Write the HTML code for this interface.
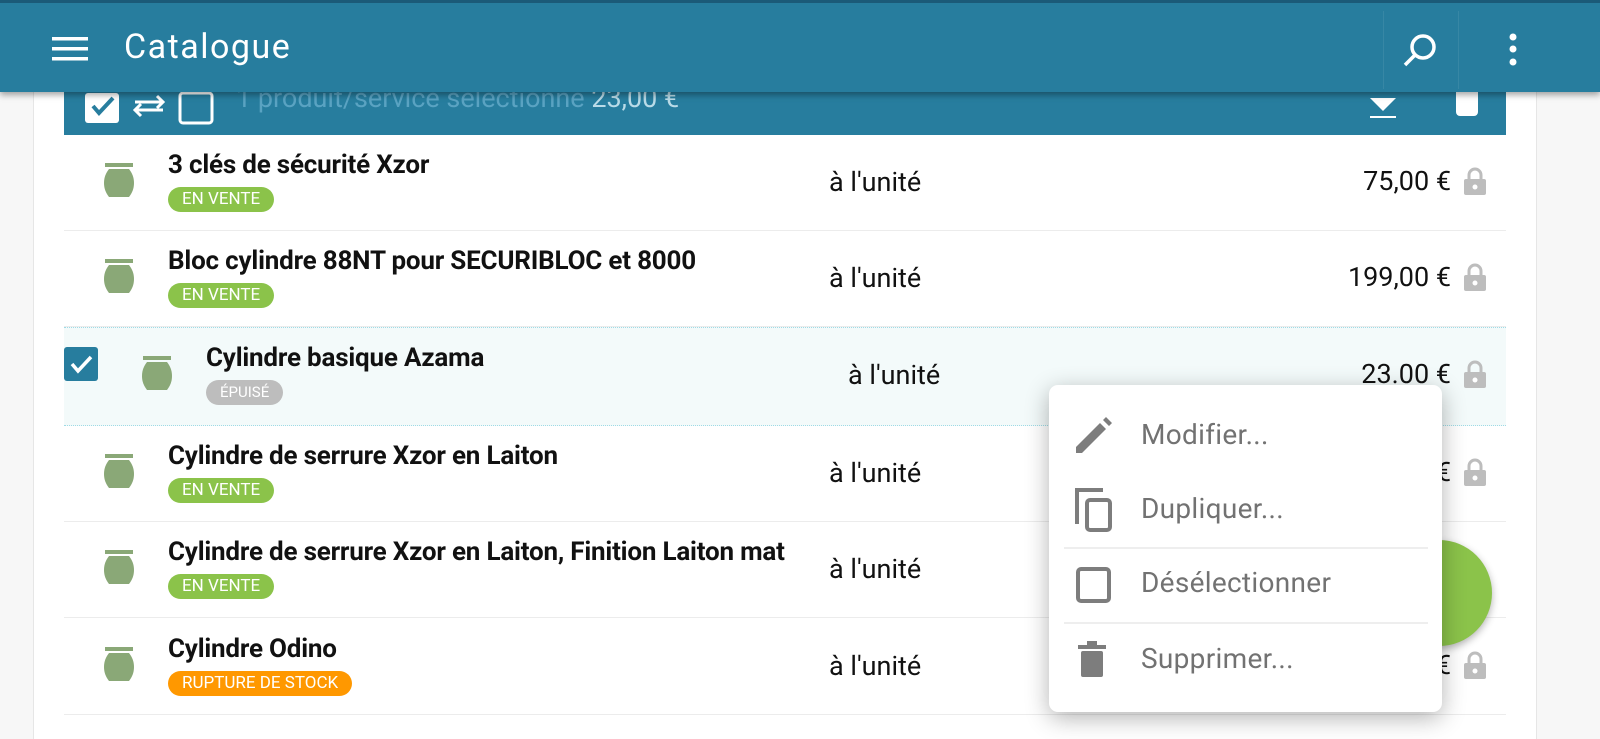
<!DOCTYPE html>
<html><head><meta charset="utf-8"><style>
*{margin:0;padding:0;box-sizing:border-box}
body{width:1600px;height:739px;overflow:hidden;background:#f7f7f7;font-family:"Roboto","Liberation Sans",sans-serif;position:relative}
.card{position:absolute;left:33px;top:0;width:1504px;height:739px;background:#fff;border-left:1px solid #e6e6e6;border-right:1px solid #e6e6e6}
.hdr{position:absolute;left:0;top:0;width:1600px;height:92px;background:#277d9e;border-top:3px solid #1b5a78;box-shadow:0 3px 6px rgba(0,0,0,.35);z-index:5}
.hdr .t{position:absolute;left:124px;top:24px;color:#fff;font-size:34px;letter-spacing:1.5px}
.selbar{position:absolute;left:64px;top:80px;width:1442px;height:55px;background:#277d9e}
.row{position:absolute;left:64px;width:1442px;height:96px;border-bottom:1px solid #ececec}
.row .name{position:absolute;left:104px;top:15px;font-size:26px;font-weight:bold;color:#111;white-space:nowrap;letter-spacing:-.2px}
.row .b{position:absolute;left:104px;top:52px;height:25px;border-radius:13px;padding:0 14px;font-size:17px;color:#fff;line-height:25px}
.row .u{position:absolute;left:765px;top:31px;font-size:27px;color:#111}
.row .p{position:absolute;right:55px;top:30px;font-size:27px;color:#111}
.row .lk{position:absolute;right:20px;top:32px}
.row .pot{position:absolute;left:40px;top:28px}
.g{background:#8bc34a}
.menu{position:absolute;left:1049px;top:385px;width:393px;height:327px;background:#fff;border-radius:9px;box-shadow:0 6px 24px rgba(0,0,0,.3);z-index:4}
.mi{position:absolute;left:92px;font-size:28px;color:#727272;letter-spacing:.3px}
.sep{position:absolute;left:15px;width:364px;height:2px;background:#eee}
</style></head><body>
<div class="card"></div>
<div class="hdr">
<svg style="position:absolute;left:52px;top:34px" width="36" height="24"><rect y="0" width="36" height="3.5" fill="#fff"/><rect y="10" width="36" height="3.5" fill="#fff"/><rect y="20" width="36" height="3.5" fill="#fff"/></svg>
<div class="t">Catalogue</div>
<div style="position:absolute;left:1383px;top:8px;width:1px;height:78px;background:rgba(255,255,255,.08)"></div>
<div style="position:absolute;left:1458px;top:8px;width:1px;height:78px;background:rgba(255,255,255,.08)"></div>
<svg style="position:absolute;left:1402px;top:28px" width="36" height="36"><circle cx="21" cy="16" r="11" fill="none" stroke="#fff" stroke-width="3.5"/><line x1="13" y1="24" x2="3" y2="34" stroke="#fff" stroke-width="3.5"/></svg>
<svg style="position:absolute;left:1506px;top:30px" width="14" height="34"><circle cx="7" cy="4" r="3.5" fill="#fff"/><circle cx="7" cy="16" r="3.5" fill="#fff"/><circle cx="7" cy="29" r="3.5" fill="#fff"/></svg>
</div>
<div class="selbar">
<svg style="position:absolute;left:21px;top:8px" width="140" height="40"><rect x="0" y="5" width="34" height="30" rx="3" fill="#fff"/><path d="M8 18l6 7 14-15" stroke="#277d9e" stroke-width="4" fill="none"/><path d="M50 22h28M56 16l-6 6 6 6M50 14h28M72 8l6 6-6 6" stroke="#fff" stroke-width="3" fill="none"/><rect x="95" y="5" width="32" height="30" rx="3" fill="none" stroke="#fff" stroke-width="3"/></svg>
<div style="position:absolute;left:172px;top:2px;font-size:27px;color:#5aa3c2">1 produit/service sélectionné <span style="color:#b9dbe8">23,00 €</span></div>
<svg style="position:absolute;left:1304px;top:8px" width="30" height="30"><path d="M2 10h26L15 23z" fill="#fff"/><rect x="2" y="28" width="26" height="4" fill="#fff"/></svg>
<div style="position:absolute;left:1392px;top:8px;width:22px;height:28px;background:#fff;border-radius:0 0 4px 4px"></div>
</div>

<div class="row" style="top:135px"><svg class="pot" width="30" height="36"><rect x="1" y="0" width="28" height="4" fill="#8aa877"/><path d="M5 6h20c3 4 5 8 5 14 0 6-2 10-5 14H5C2 30 0 26 0 20 0 14 2 10 5 6z" fill="#8aa877"/></svg><div class="name">3 clés de sécurité Xzor</div><div class="b g">EN VENTE</div><div class="u">à l'unité</div><div class="p">75,00 €</div><svg class="lk" width="22" height="28"><path d="M5 12V8a6 6 0 0 1 12 0v4" stroke="#bdbdbd" stroke-width="3" fill="none"/><rect x="0" y="12" width="22" height="16" rx="2" fill="#bdbdbd"/><circle cx="11" cy="20" r="2.5" fill="#fff"/></svg></div>
<div class="row" style="top:231px"><svg class="pot" width="30" height="36"><rect x="1" y="0" width="28" height="4" fill="#8aa877"/><path d="M5 6h20c3 4 5 8 5 14 0 6-2 10-5 14H5C2 30 0 26 0 20 0 14 2 10 5 6z" fill="#8aa877"/></svg><div class="name">Bloc cylindre 88NT pour SECURIBLOC et 8000</div><div class="b g">EN VENTE</div><div class="u">à l'unité</div><div class="p">199,00 €</div><svg class="lk" width="22" height="28"><path d="M5 12V8a6 6 0 0 1 12 0v4" stroke="#bdbdbd" stroke-width="3" fill="none"/><rect x="0" y="12" width="22" height="16" rx="2" fill="#bdbdbd"/><circle cx="11" cy="20" r="2.5" fill="#fff"/></svg></div>
<div class="row" style="top:327px;height:99px;background:#f3fafa;border-top:1px dotted #9fdbe6;border-bottom:1px dotted #9fdbe6">
<svg style="position:absolute;left:0;top:19px" width="34" height="34"><rect width="34" height="34" rx="3" fill="#277d9e"/><path d="M8 17l6 7 13-14" stroke="#fff" stroke-width="3.5" fill="none"/></svg>
<svg class="pot" style="left:78px" width="30" height="36"><rect x="1" y="0" width="28" height="4" fill="#8aa877"/><path d="M5 6h20c3 4 5 8 5 14 0 6-2 10-5 14H5C2 30 0 26 0 20 0 14 2 10 5 6z" fill="#8aa877"/></svg><div class="name" style="left:142px">Cylindre basique Azama</div><div class="b" style="left:142px;background:#bdbdbd;font-size:15px">ÉPUISÉ</div><div class="u" style="left:784px">à l'unité</div><div class="p">23.00 €</div><svg class="lk" width="22" height="28"><path d="M5 12V8a6 6 0 0 1 12 0v4" stroke="#bdbdbd" stroke-width="3" fill="none"/><rect x="0" y="12" width="22" height="16" rx="2" fill="#bdbdbd"/><circle cx="11" cy="20" r="2.5" fill="#fff"/></svg></div>
<div class="row" style="top:426px"><svg class="pot" width="30" height="36"><rect x="1" y="0" width="28" height="4" fill="#8aa877"/><path d="M5 6h20c3 4 5 8 5 14 0 6-2 10-5 14H5C2 30 0 26 0 20 0 14 2 10 5 6z" fill="#8aa877"/></svg><div class="name">Cylindre de serrure Xzor en Laiton</div><div class="b g">EN VENTE</div><div class="u">à l'unité</div><div class="p">0 €</div><svg class="lk" width="22" height="28"><path d="M5 12V8a6 6 0 0 1 12 0v4" stroke="#bdbdbd" stroke-width="3" fill="none"/><rect x="0" y="12" width="22" height="16" rx="2" fill="#bdbdbd"/><circle cx="11" cy="20" r="2.5" fill="#fff"/></svg></div>
<div class="row" style="top:522px"><svg class="pot" width="30" height="36"><rect x="1" y="0" width="28" height="4" fill="#8aa877"/><path d="M5 6h20c3 4 5 8 5 14 0 6-2 10-5 14H5C2 30 0 26 0 20 0 14 2 10 5 6z" fill="#8aa877"/></svg><div class="name">Cylindre de serrure Xzor en Laiton, Finition Laiton mat</div><div class="b g">EN VENTE</div><div class="u">à l'unité</div></div>
<div class="row" style="top:619px"><svg class="pot" width="30" height="36"><rect x="1" y="0" width="28" height="4" fill="#8aa877"/><path d="M5 6h20c3 4 5 8 5 14 0 6-2 10-5 14H5C2 30 0 26 0 20 0 14 2 10 5 6z" fill="#8aa877"/></svg><div class="name">Cylindre Odino</div><div class="b" style="background:#ff9800">RUPTURE DE STOCK</div><div class="u">à l'unité</div><div class="p">0 €</div><svg class="lk" width="22" height="28"><path d="M5 12V8a6 6 0 0 1 12 0v4" stroke="#bdbdbd" stroke-width="3" fill="none"/><rect x="0" y="12" width="22" height="16" rx="2" fill="#bdbdbd"/><circle cx="11" cy="20" r="2.5" fill="#fff"/></svg></div>

<div style="position:absolute;left:1386px;top:540px;width:106px;height:106px;border-radius:50%;background:#8bc34a;box-shadow:0 3px 8px rgba(0,0,0,.3);z-index:3"></div>

<div class="menu">
<svg style="position:absolute;left:27px;top:32px" width="36" height="36"><path d="M0 36v-6L24 6l6 6L6 36z M27 3l3-3 6 6-3 3z" fill="#7d7d7d"/></svg>
<div class="mi" style="top:33px">Modifier...</div>
<svg style="position:absolute;left:26px;top:103px" width="38" height="44"><path d="M2 36V2h26" stroke="#7d7d7d" stroke-width="4" fill="none"/><rect x="12" y="12" width="23" height="30" rx="3" stroke="#7d7d7d" stroke-width="4" fill="none"/></svg>
<div class="mi" style="top:107px">Dupliquer...</div>
<div class="sep" style="top:162px"></div>
<svg style="position:absolute;left:27px;top:182px" width="36" height="36"><rect x="2" y="2" width="31" height="32" rx="3" stroke="#7d7d7d" stroke-width="4" fill="none"/></svg>
<div class="mi" style="top:181px">Désélectionner</div>
<div class="sep" style="top:237px"></div>
<svg style="position:absolute;left:29px;top:256px" width="30" height="38"><rect x="0" y="4" width="28" height="4" fill="#7d7d7d"/><rect x="9" y="0" width="10" height="4" fill="#7d7d7d"/><rect x="3" y="10" width="22" height="26" rx="2" fill="#7d7d7d"/></svg>
<div class="mi" style="top:257px">Supprimer...</div>
</div>
</body></html>
